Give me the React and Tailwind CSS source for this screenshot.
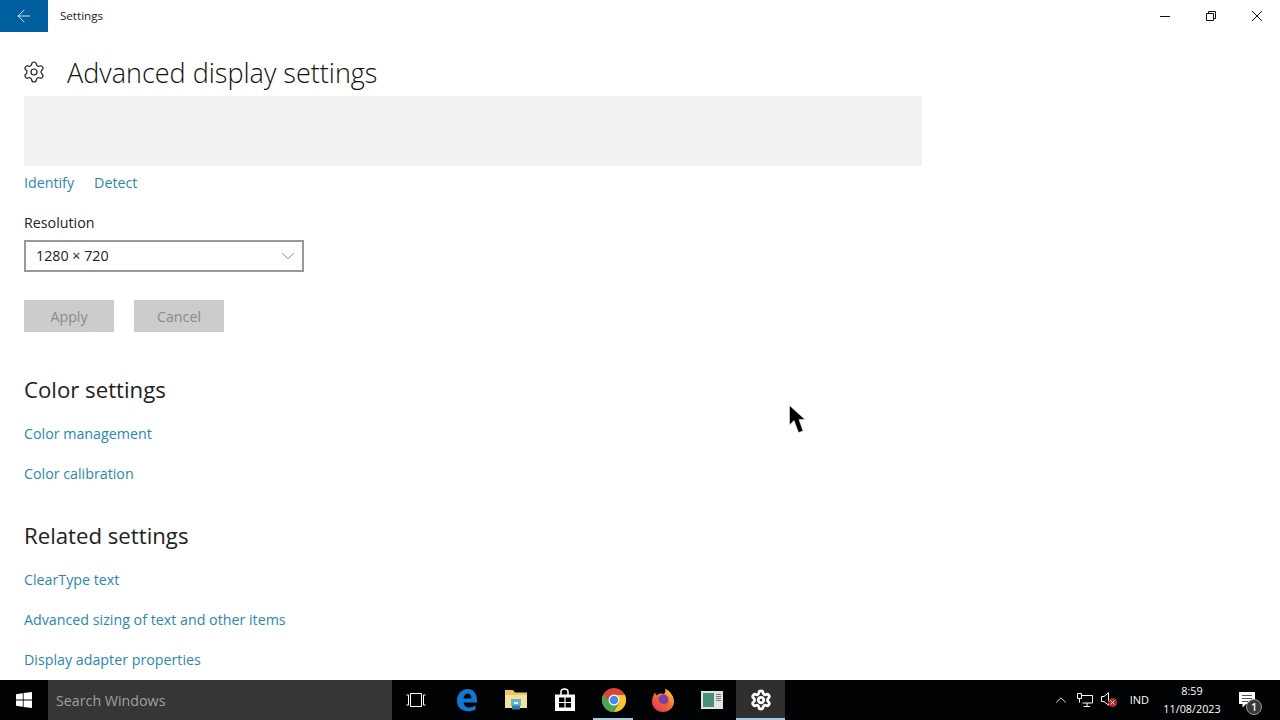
import { ArrowLeft, ChevronDown, ChevronUp, X, Settings } from "lucide-react"

const links1 = ["Color management", "Color calibration"]
const links2 = ["ClearType text", "Advanced sizing of text and other items", "Display adapter properties"]

function WinLogo({ size = 16, fill = "#fff" }) {
  return (
    <svg width={size} height={size} viewBox="0 0 16 16">
      <path fill={fill} d="M0 2.2 6.8 1.2V7.6H0ZM7.6 1.1 16 0V7.6H7.6ZM0 8.4H6.8V14.8L0 13.8ZM7.6 8.4H16V16L7.6 14.9Z" />
    </svg>
  )
}

function EdgeIcon() {
  return (
    <svg width="22" height="24" viewBox="0 0 22 24">
      <path fill="#0f78d4" d="M1 13C1 6 5.5 1 11.5 1 17.5 1 21 5.5 21 12.5V14.5H7.5C8 17.5 10 19.5 13 19.5 15.5 19.5 17.5 18.8 19.5 17.5V21.5C17.5 22.7 15 23.3 12.5 23.3 5.5 23.3 1 19 1 13ZM7.5 10.5H15.5C15.5 7.5 14 5.5 11.5 5.5 9.5 5.5 8 7.5 7.5 10.5Z" />
    </svg>
  )
}

function FolderIcon() {
  return (
    <svg width="22" height="22" viewBox="0 0 22 22">
      <path fill="#e8c766" d="M0 1H8L10 3.5H22V8H0Z" />
      <path fill="#f6e197" d="M0 6H22V19H0Z" />
      <path fill="#5fb4d8" d="M6 10H16V17H6Z" />
      <path fill="#e9f3f7" d="M9 13H13V15H9Z" />
      <path fill="#2c7fa8" d="M7 16.5H15V20.5H7Z" />
    </svg>
  )
}

function StoreIcon() {
  return (
    <svg width="22" height="24" viewBox="0 0 22 24">
      <path fill="none" stroke="#fff" strokeWidth="1.5" d="M7 7V4C7 2.3 8.5 1 10.5 1S14 2.3 14 4V7" />
      <path fill="#fff" d="M1 6.5H21V23H1Z" />
      <path fill="#000" d="M5 9.5H10.4V14H5ZM11.6 9.5H17V14H11.6ZM5 15H10.4V19.5H5ZM11.6 15H17V19.5H11.6Z" />
    </svg>
  )
}

function ChromeIcon() {
  return (
    <svg width="24" height="24" viewBox="0 0 24 24">
      <circle cx="12" cy="12" r="12" fill="#d9453a" />
      <path fill="#4aa651" d="M1.6 6A12 12 0 0 0 12 24L17.5 15 12 17 7 14Z" />
      <path fill="#f6c531" d="M12 7H23A12 12 0 0 1 12 24L17.5 14.5Z" />
      <circle cx="12" cy="12" r="5.5" fill="#fff" />
      <circle cx="12" cy="12" r="4.3" fill="#4a88e8" />
    </svg>
  )
}

function FirefoxIcon() {
  return (
    <svg width="24" height="24" viewBox="0 0 24 24">
      <defs>
        <linearGradient id="fx" x1="0.9" y1="0.1" x2="0.2" y2="0.9">
          <stop offset="0" stopColor="#ffc438" />
          <stop offset="0.5" stopColor="#f5702c" />
          <stop offset="1" stopColor="#e8385a" />
        </linearGradient>
      </defs>
      <path fill="url(#fx)" d="M14 .5C19 3 23 8 23 13.5 23 19.5 18 24 12 24 6 24 1 19.5 1 13.5 1 9.5 2.5 6.5 4 4.5L5.5 7.5C7.5 5 11 5 13 6 14.5 4.5 15 2.5 14 .5Z" />
      <circle cx="12.5" cy="11.5" r="5" fill="#7b3fa8" />
      <path fill="#f0583a" d="M6.5 11C8 16 14 18 18.5 13.5 17.5 20 8 21 6.5 11Z" />
    </svg>
  )
}

function AppTile() {
  return (
    <div className="w-[22px] h-[18px] bg-[#dfe5e2] flex p-[2px] gap-[2px]">
      <div className="w-[11px] bg-[#4c8f79]" />
      <div className="flex-1 flex flex-col gap-[1px] pt-[1px]">
        <div className="h-[1px] bg-[#777]" />
        <div className="h-[1px] bg-[#777]" />
        <div className="h-[1px] bg-[#777]" />
        <div className="h-[1px] bg-[#777]" />
      </div>
    </div>
  )
}

function TrayNetwork() {
  return (
    <svg width="16" height="14" viewBox="0 0 16 14" fill="none" stroke="#fff" strokeWidth="1">
      <path d="M4.5 2.5H15.5V10H5.5M10 10V13M6.5 13.5H13" />
      <path d="M.5 .5H4.5V5.5H.5ZM2.5 5.5V9.5" />
    </svg>
  )
}

function TraySound() {
  return (
    <div className="relative w-[18px] h-[18px]">
      <svg width="10" height="14" viewBox="0 0 10 14" fill="none" stroke="#fff" strokeWidth="1" className="absolute left-0 top-[1px]">
        <path d="M.5 4.5H3L7.5 .8V13.2L3 9.5H.5Z" />
      </svg>
      <div className="absolute left-[7px] top-[7px] w-[9px] h-[9px] rounded-full bg-[#b3262e] flex items-center justify-center">
        <X size={7} color="#fff" strokeWidth={3} />
      </div>
    </div>
  )
}

function Cursor() {
  return (
    <svg width="18" height="30" viewBox="0 0 18 30" className="absolute left-[789px] top-[405px]">
      <path fill="#000" d="M.5 .5V20L5 15.5 9.5 27.5 14 26 10 14.5H16Z" stroke="#fff" strokeWidth=".5" />
    </svg>
  )
}

function TaskItem({ active, running, first, children }) {
  return (
    <div className={`relative h-10 flex items-center justify-center ${first ? "w-12 mr-[2px]" : "w-[49px]"} ${active ? "bg-[#2f2f2f]" : ""}`}>
      {children}
      {running && <div className="absolute bottom-0 left-[4px] right-[5px] h-[2px] bg-[#a5c8e4]" />}
      {active && <div className="absolute bottom-0 left-0 right-0 h-[2px] bg-[#a5c8e4]" />}
    </div>
  )
}

function LinkRow({ children }) {
  return <a className="block text-[14.25px] leading-5 text-[#2b88ae]">{children}</a>
}

export default function App() {
  return (
    <div className="relative w-[1280px] h-[720px] overflow-hidden bg-white flex flex-col font-['Open_Sans','Noto_Sans',sans-serif]">
      {/* title bar */}
      <div className="h-8 flex items-center shrink-0">
        <div className="w-12 h-8 bg-[#005f9e] flex items-center justify-center">
          <ArrowLeft size={20} color="#fff" strokeWidth={1} />
        </div>
        <span className="ml-3 text-[11.6px] text-[#222]">Settings</span>
        <div className="ml-auto flex">
          <div className="w-[46px] h-8 flex items-center justify-center">
            <svg width="10" height="10" viewBox="0 0 10 10" stroke="#111" fill="none"><path d="M0 5.5H10" /></svg>
          </div>
          <div className="w-[46px] h-8 flex items-center justify-center">
            <svg width="10" height="10" viewBox="0 0 10 10" stroke="#111" fill="none"><path d="M.5 2.5H7.5V9.5H.5ZM2.5 2.5V.5H9.5V7.5H7.5" /></svg>
          </div>
          <div className="w-[46px] h-8 flex items-center justify-center">
            <svg width="10" height="10" viewBox="0 0 10 10" stroke="#111" fill="none"><path d="M0 0 10 10M10 0 0 10" /></svg>
          </div>
        </div>
      </div>

      {/* page header */}
      <div className="h-[64px] shrink-0 flex items-center pl-[22px] pt-4">
        <Settings size={24} color="#222" strokeWidth={1.2} />
        <h1 className="ml-[21px] text-[27px] font-light leading-none text-[#111]">Advanced display settings</h1>
      </div>

      {/* content */}
      <div className="flex-1 pl-6">
        <div className="w-[898px] h-[70px] bg-[#f2f2f2]" />
        <div className="flex gap-5 mt-[5px] h-6 items-center">
          <LinkRow>Identify</LinkRow>
          <LinkRow>Detect</LinkRow>
        </div>
        <div className="mt-[18px] text-[14.25px] leading-5 text-[#222]">Resolution</div>
        <div className="mt-[7px] w-[280px] h-8 border-2 border-[#999] flex items-center justify-between pl-[10px] pr-[3px] text-[14.25px] text-[#222]">
          <span>1280 × 720</span>
          <ChevronDown size={22} color="#666" strokeWidth={0.8} />
        </div>
        <div className="flex gap-5 mt-7">
          <div className="w-[90px] h-8 pt-px bg-[#ccc] flex items-center justify-center text-[14.25px] text-[#8a8a8a]">Apply</div>
          <div className="w-[90px] h-8 pt-px bg-[#ccc] flex items-center justify-center text-[14.25px] text-[#8a8a8a]">Cancel</div>
        </div>
        <h2 className="mt-[44px] text-[22.2px] leading-7 font-normal text-[#222]">Color settings</h2>
        <div className="mt-5 flex flex-col gap-5">
          {links1.map(l => <LinkRow key={l}>{l}</LinkRow>)}
        </div>
        <h2 className="mt-[38px] text-[22.2px] leading-7 font-normal text-[#222]">Related settings</h2>
        <div className="mt-5 flex flex-col gap-5">
          {links2.map(l => <LinkRow key={l}>{l}</LinkRow>)}
        </div>
      </div>

      {/* taskbar */}
      <div className="h-10 shrink-0 bg-[#020304] flex items-center text-white">
        <div className="w-12 h-10 flex items-center justify-center"><WinLogo /></div>
        <div className="w-[344px] h-10 pt-px bg-[#363636] flex items-center pl-2 text-[14.25px] text-[#a0a0a0]">Search Windows</div>
        <div className="flex">
          <TaskItem first>
            <svg width="20" height="14" viewBox="0 0 20 14" fill="none" stroke="#fff" strokeWidth="1">
              <path d="M4.5 .5H15.5V13.5H4.5ZM2.5 2V12H.5M17.5 2V12H19.5M2.5 2H.5M17.5 2H19.5" />
            </svg>
          </TaskItem>
          <TaskItem><EdgeIcon /></TaskItem>
          <TaskItem><FolderIcon /></TaskItem>
          <TaskItem><StoreIcon /></TaskItem>
          <TaskItem running><ChromeIcon /></TaskItem>
          <TaskItem><FirefoxIcon /></TaskItem>
          <TaskItem><AppTile /></TaskItem>
          <TaskItem active><Settings size={22} color="#fff" strokeWidth={3} /></TaskItem>
        </div>
        <div className="ml-auto flex items-center pr-[9px]">
          <ChevronUp size={18} color="#fff" strokeWidth={1.2} />
          <div className="ml-[7px] flex"><TrayNetwork /></div>
          <div className="ml-[8px]"><TraySound /></div>
          <span className="ml-[11px] text-[11px]">IND</span>
          <div className="ml-[10px] w-[66px] flex flex-col items-center text-[10.8px] leading-[18px]">
            <span>8:59</span>
            <span>11/08/2023</span>
          </div>
          <div className="relative w-[46px] h-10">
            <svg width="16" height="16" viewBox="0 0 16 16" className="absolute left-[14px] top-[12px]">
              <path fill="#fff" d="M0 0H16V12H7L3.5 15.5V12H0Z" />
              <path stroke="#555" strokeWidth="1" d="M3 3.5H13M3 6.5H13M3 9.5H9" />
            </svg>
            <div className="absolute left-[21px] top-[19px] w-4 h-4 rounded-full bg-[#3a3a3a] border border-[#999] text-[10px] font-semibold leading-none flex items-center justify-center">1</div>
          </div>
        </div>
      </div>

      <Cursor />
    </div>
  )
}
